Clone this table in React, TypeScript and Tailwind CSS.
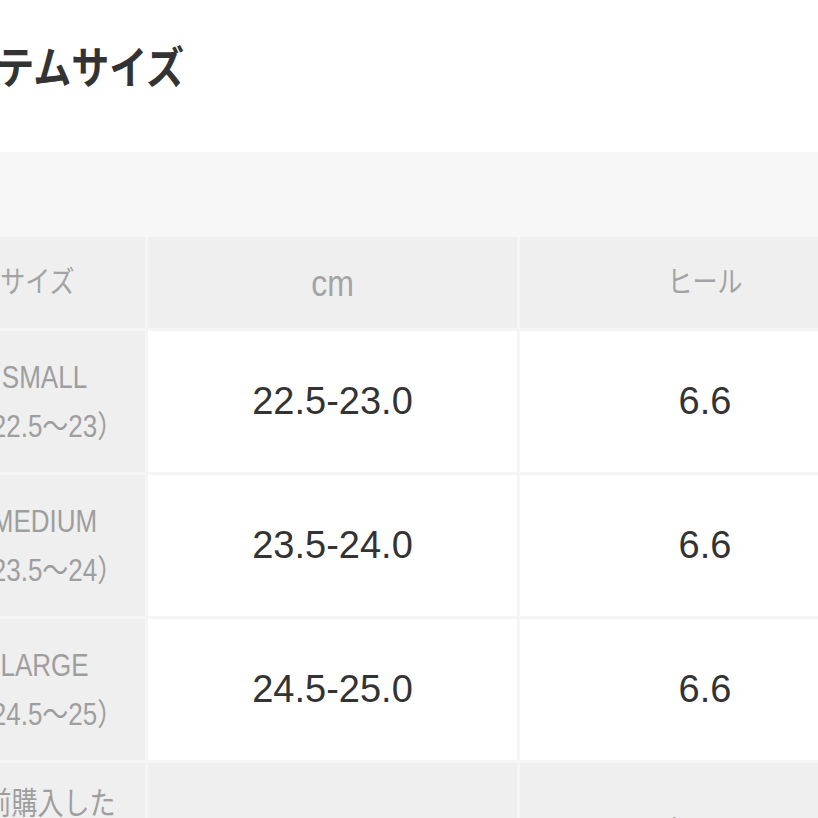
import React from "react";

// text in the screenshot is a bit taller than the font renders, stretch it
const T = ({ children, className = "" }: { children: React.ReactNode; className?: string }) => (
  <span className={`inline-block scale-y-[1.18] ${className}`}>{children}</span>
);

const rows = [
  { name: "SMALL", range: "（22.5～23）", cm: "22.5-23.0", heel: "6.6" },
  { name: "MEDIUM", range: "（23.5～24）", cm: "23.5-24.0", heel: "6.6" },
  { name: "LARGE", range: "（24.5～25）", cm: "24.5-25.0", heel: "6.6" },
];

const App = () => {
  return (
    <div className="w-[818px] h-[818px] overflow-hidden bg-white font-['Liberation_Sans','Noto_Sans_CJK_JP',sans-serif]">
      {/* TITLE */}
      <div className="h-[152px] pt-[50px] -ml-[77px]">
        <h1 className="text-[38px] leading-[38px] font-bold text-[#333] whitespace-nowrap">
          <T className="scale-y-[1.05]">アイテムサイズ</T>
        </h1>
      </div>

      <div className="h-[85px] bg-[#f7f7f7]" />

      {/* SIZE TABLE */}
      <div className="-ml-[56px] w-[946px] grid grid-cols-[201px_369px_370px] gap-[3px] bg-[#f5f5f5]">
        <div className="h-[91px] bg-[#efefef] flex items-center justify-center text-[25px] text-[#a3a3a3]">
          <T className="mr-[14px]">サイズ</T>
        </div>
        <div className="h-[91px] bg-[#efefef] flex items-center justify-center text-[32px] text-[#a3a3a3]">
          <T className="scale-y-[1.1]">cm</T>
        </div>
        <div className="h-[91px] bg-[#efefef] flex items-center justify-center text-[25px] text-[#a3a3a3]">
          <T>ヒール</T>
        </div>

        {rows.map((r) => (
          <React.Fragment key={r.name}>
            <div className="h-[141px] bg-[#efefef] flex flex-col items-center justify-center text-[26px] leading-[49px] text-[#9e9e9e] whitespace-nowrap">
              <T>{r.name}</T>
              <T>{r.range}</T>
            </div>
            <div className="h-[141px] bg-white flex items-center justify-center text-[38px] text-[#333]">
              {r.cm}
            </div>
            <div className="h-[141px] bg-white flex items-center justify-center text-[38px] text-[#333]">
              {r.heel}
            </div>
          </React.Fragment>
        ))}

        <div className="h-[130px] bg-[#efefef] flex flex-col items-center justify-center text-[26px] leading-[49px] text-[#9e9e9e] whitespace-nowrap">
          <T className="mr-[14px]">以前購入した</T>
          <T className="mr-[14px]">靴のサイズ</T>
        </div>
        <div className="h-[130px] bg-[#efefef] flex items-center justify-center text-[32px] text-[#a3a3a3]">
          <T className="scale-y-[1.1]">cm</T>
        </div>
        <div className="h-[130px] bg-[#efefef] flex items-center justify-center text-[25px] text-[#a3a3a3]">
          <T className="mt-[6px]">ヒール</T>
        </div>
      </div>
    </div>
  );
};

export default App;
